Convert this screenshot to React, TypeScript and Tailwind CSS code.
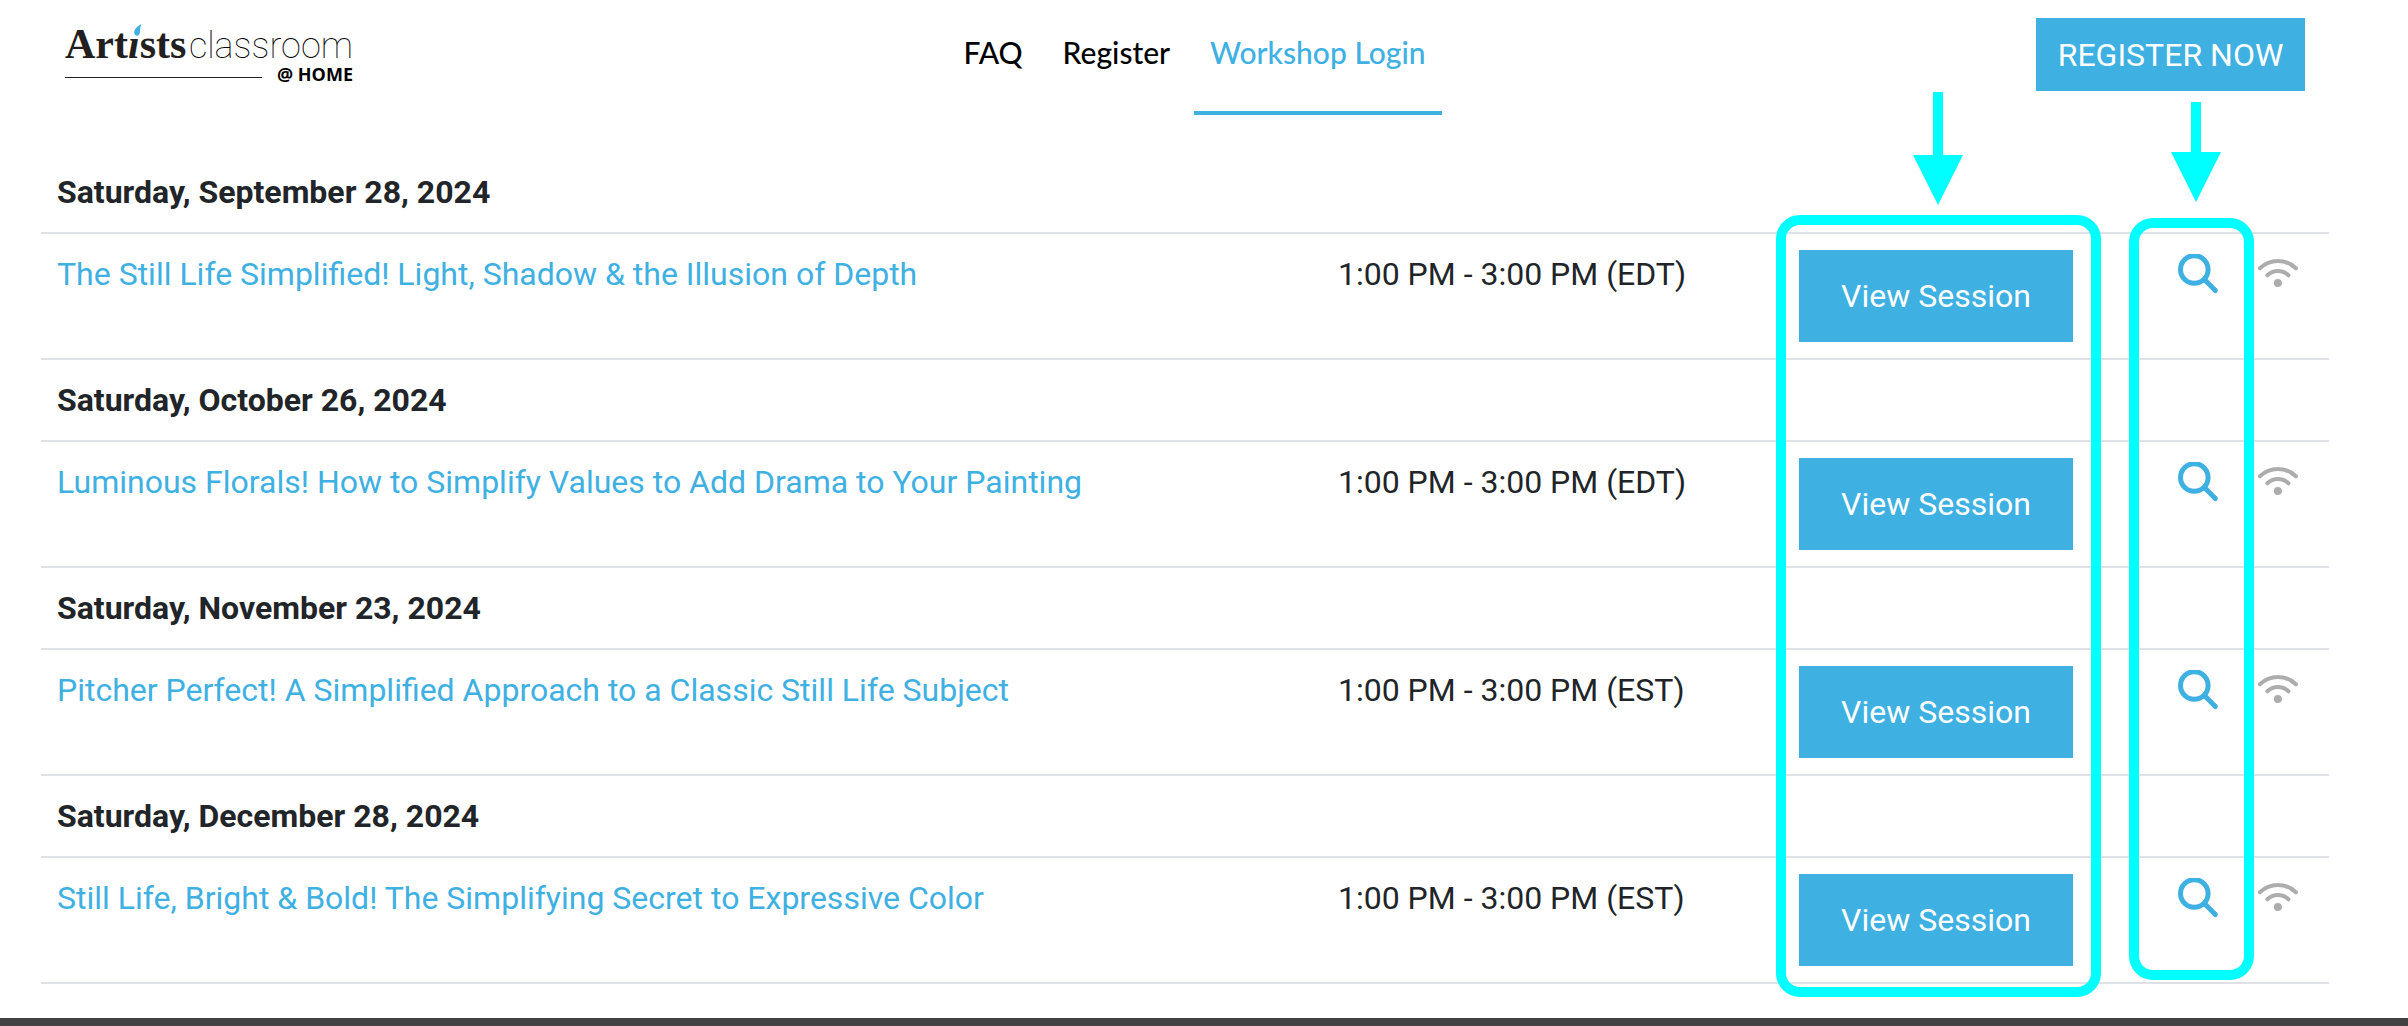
type Session = {
  date: string;
  title: string;
  time: string;
};

const sessions: Session[] = [
  {
    date: "Saturday, September 28, 2024",
    title: "The Still Life Simplified! Light, Shadow & the Illusion of Depth",
    time: "1:00 PM - 3:00 PM (EDT)",
  },
  {
    date: "Saturday, October 26, 2024",
    title: "Luminous Florals! How to Simplify Values to Add Drama to Your Painting",
    time: "1:00 PM - 3:00 PM (EDT)",
  },
  {
    date: "Saturday, November 23, 2024",
    title: "Pitcher Perfect! A Simplified Approach to a Classic Still Life Subject",
    time: "1:00 PM - 3:00 PM (EST)",
  },
  {
    date: "Saturday, December 28, 2024",
    title: "Still Life, Bright & Bold! The Simplifying Secret to Expressive Color",
    time: "1:00 PM - 3:00 PM (EST)",
  },
];

function Logo() {
  return (
    <a href="#home" aria-label="Artists classroom at home" className="block w-[288px] text-[#231f20]">
      <div className="flex h-12 items-baseline justify-between leading-[52px]">
        <span className="relative font-['Liberation_Serif',serif] text-[42px] font-bold">
          Art<i>ı</i>sts
          <svg width="8" height="12" viewBox="0 0 8 12" className="absolute top-[6px] left-[69px]">
            <path d="M7.500 0C2 3 0 6 .3 9c.3 3.500 5 3.500 5.500 0 .3-3 .2-6 1.700-9z" fill="#3eb0e2" />
          </svg>
        </span>
        <span className="font-[Roboto,sans-serif] text-[36px] font-thin text-black">classroom</span>
      </div>
      <div className="flex items-start justify-between">
        <span className="mt-[11px] h-px w-[197px] bg-[#231f20]" />
        <span className="font-['Open_Sans',sans-serif] text-[18px] leading-4 font-bold text-black">
          @ HOME
        </span>
      </div>
    </a>
  );
}

function SearchIcon() {
  return (
    <svg width="40" height="40" viewBox="0 0 40 40" fill="none" stroke="#3eb0e2" strokeWidth="5">
      <circle cx="16.300" cy="15.500" r="13.800" />
      <path d="M26.500 25.500L37.300 36.500" strokeLinecap="round" />
    </svg>
  );
}

function WifiIcon() {
  return (
    <svg width="40" height="32" viewBox="0 0 40 32" fill="none" stroke="#adadad" strokeWidth="4" strokeLinecap="round">
      <path d="M1.900 10.300a25.800 25.800 0 0 1 36 0" />
      <path d="M9.400 17.300a15 15 0 0 1 21 0" />
      <circle cx="19.900" cy="25" r="4" fill="#adadad" stroke="none" />
    </svg>
  );
}

function Arrow({ className, shaft }: { className: string; shaft: number }) {
  return (
    <svg
      width="50"
      height={shaft + 50}
      viewBox={`0 0 50 ${shaft + 50}`}
      fill="#00ffff"
      className={`absolute ${className}`}
    >
      <path d={`M20 0h10v${shaft}h20l-25 50l-25-50h20z`} />
    </svg>
  );
}

export default function App() {
  return (
    <div className="bg-white font-[Roboto,sans-serif] text-[32px] leading-[48px] text-[#212529]">
      <header className="flex items-start justify-between pt-[18px] pr-[103px] pl-[65px]">
        <Logo />
        <nav className="flex gap-2 font-[Lato,sans-serif] text-[30px] font-medium text-black">
          <a href="#faq" className="px-4 pt-[10px]">
            FAQ
          </a>
          <a href="#register" className="px-4 pt-[10px]">
            Register
          </a>
          <a href="#login" className="border-b-4 border-[#3eb0e2] px-4 pt-[10px] pb-[35px] text-[#3eb0e2]">
            Workshop Login
          </a>
        </nav>
        <button type="button" className="h-[73px] w-[269px] bg-[#3eb0e2] text-white">
          REGISTER NOW
        </button>
      </header>

      <main className="relative mt-[37px] mr-[79px] mb-[34px] ml-[41px]">
        <table className="w-full table-fixed border-collapse text-left">
          <colgroup>
            <col />
            <col className="w-[461px]" />
            <col className="w-[379px]" />
            <col className="w-[167px]" />
          </colgroup>
          {sessions.map((session) => (
            <tbody key={session.date}>
              <tr className="border-b-2 border-[#dee2e6]">
                <th colSpan={4} scope="rowgroup" className="p-4 font-bold">
                  {session.date}
                </th>
              </tr>
              <tr className="border-b-2 border-[#dee2e6] align-top">
                <td className="p-4">
                  <a href="#session" className="text-[#3eb0e2]">
                    {session.title}
                  </a>
                </td>
                <td className="p-4">{session.time}</td>
                <td className="p-4">
                  <button type="button" className="block h-[92px] w-[274px] bg-[#3eb0e2] text-white">
                    View Session
                  </button>
                </td>
                <td className="p-4">
                  <div className="flex h-12 items-center gap-10">
                    <button type="button" aria-label="Search session">
                      <SearchIcon />
                    </button>
                    <WifiIcon />
                  </div>
                </td>
              </tr>
            </tbody>
          ))}
        </table>

        {/* Callouts over the session and search columns */}
        <Arrow className="-top-[60px] right-[366px]" shaft={63} />
        <Arrow className="-top-[50px] right-[108px]" shaft={50} />
        <div className="pointer-events-none absolute top-[63px] right-[228px] -bottom-[13px] w-[325px] rounded-[24px] border-10 border-[#00ffff]" />
        <div className="pointer-events-none absolute top-[66px] right-[75px] bottom-[4px] w-[125px] rounded-[24px] border-10 border-[#00ffff]" />
      </main>

      <footer className="h-2 bg-[#424242]" />
    </div>
  );
}
